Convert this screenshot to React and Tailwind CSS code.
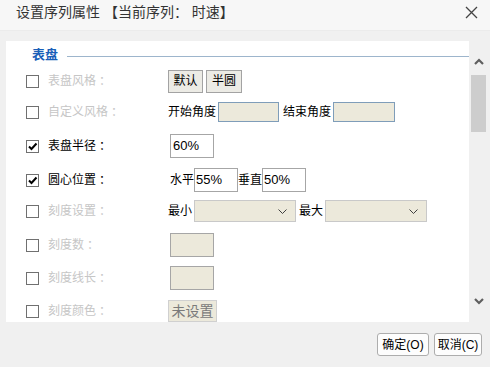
import React from 'react'

const FONT = "font-['Liberation_Sans','Noto_Sans_CJK_SC',sans-serif]"

function Check({ on }) {
  return (
    <span className="w-[13px] h-[13px] border border-[#707070] bg-white flex items-center justify-center shrink-0">
      {on && (
        <svg width="11" height="11" viewBox="0 0 11 11">
          <path d="M2 5.5 L4.5 8 L9.5 2.5" fill="none" stroke="#000" strokeWidth="2" />
        </svg>
      )}
    </span>
  )
}

function Row({ h, on, label, enabled, children }) {
  return (
    <div className={`flex items-center ${h}`}>
      <div className="w-[20px] shrink-0" />
      <Check on={on} />
      <span className={`ml-[9px] w-[120px] shrink-0 text-[12px] ${enabled ? 'text-black' : 'text-[#c6c6c6]'}`}>
        {label}<span className="ml-[3px]">：</span>
      </span>
      <div className="flex items-center text-[12px] text-black">{children}</div>
    </div>
  )
}

const Chevron = () => (
  <svg width="9" height="5" viewBox="0 0 9 5">
    <path d="M0.5 0.5 L4.5 4.5 L8.5 0.5" fill="none" stroke="#404040" strokeWidth="1" />
  </svg>
)

export default function App() {
  return (
    <div className={`w-[490px] h-[367px] bg-[#f0f0f0] flex flex-col ${FONT}`}>
      {/* title bar */}
      <div className="h-[31px] bg-[#f7f7f7] flex items-start justify-between pl-[16px] pr-[12px] pt-[4px] border-b border-[#ebebeb]">
        <span className="text-[14px] leading-[17px] text-[#333]">设置序列属性 【当前序列： 时速】</span>
        <svg width="13" height="13" viewBox="0 0 13 13" className="mt-[2px]">
          <path d="M1 1 L12 12 M12 1 L1 12" stroke="#444" strokeWidth="1.3" />
        </svg>
      </div>

      {/* body */}
      <div className="flex pt-[10px] pl-[6px]">
        <div className="w-[463px] h-[281px] bg-white overflow-hidden">
          <div className="h-[24px] flex items-center pt-[3px]">
            <div className="w-[26px] shrink-0" />
            <span className="shrink-0 text-[13px] font-bold text-[#1a5fb8] leading-none">表盘</span>
            <div className="flex-1 ml-[9px] mt-[3px] h-px bg-[#9db5cc]" />
          </div>

          <Row h="h-[32px]" label="表盘风格">
            <button className="w-[35px] h-[23px] bg-[#ecebe5] border border-[#a3a3a3] text-[12px]">默认</button>
            <button className="ml-[3px] w-[36px] h-[23px] bg-[#ecebe5] border border-[#a3a3a3] text-[12px]">半圆</button>
          </Row>

          <Row h="h-[30px]" label="自定义风格">
            <span>开始角度</span>
            <div className="ml-[2px] w-[61px] h-[20px] bg-[#ece9db] border border-[#7f9db9]" />
            <span className="ml-[4px]">结束角度</span>
            <div className="ml-[2px] w-[62px] h-[20px] bg-[#ece9db] border border-[#7f9db9]" />
          </Row>

          <Row h="h-[38px]" on enabled label="表盘半径">
            <div className="ml-[2px] w-[44px] h-[24px] bg-white border border-[#a6a6a6] flex items-center pl-[2px] text-[13px]">60%</div>
          </Row>

          <Row h="h-[30px]" on enabled label="圆心位置">
            <span className="ml-[2px]">水平</span>
            <div className="w-[44px] h-[24px] bg-white border border-[#a6a6a6] flex items-center pl-[1px] text-[13px]">55%</div>
            <span>垂直</span>
            <div className="w-[44px] h-[24px] bg-white border border-[#a6a6a6] flex items-center pl-[1px] text-[13px]">50%</div>
          </Row>

          <Row h="h-[32px]" label="刻度设置">
            <span>最小</span>
            <div className="ml-[2px] w-[102px] h-[22px] bg-[#ece9db] border border-[#c9c9c9] flex items-center justify-end pr-[8px]"><Chevron /></div>
            <span className="ml-[3px]">最大</span>
            <div className="ml-[2px] w-[102px] h-[22px] bg-[#ece9db] border border-[#c9c9c9] flex items-center justify-end pr-[8px]"><Chevron /></div>
          </Row>

          <Row h="h-[36px]" label="刻度数">
            <div className="ml-[2px] w-[44px] h-[24px] bg-[#ece9db] border border-[#a6a6a6]" />
          </Row>

          <Row h="h-[30px]" label="刻度线长">
            <div className="ml-[2px] w-[44px] h-[24px] bg-[#ece9db] border border-[#a6a6a6]" />
          </Row>

          <Row h="h-[36px]" label="刻度颜色">
            <div className="w-[49px] h-[22px] bg-[#ece9db] border border-[#d0d0d0] flex items-center justify-center text-[14px] text-[#7a7a7a]">未设置</div>
          </Row>
        </div>

        {/* scrollbar */}
        <div className="w-[17px] ml-[1px] flex flex-col items-center pt-[17px]">
          <svg width="10" height="7" viewBox="0 0 10 7">
            <path d="M1 6 L5 2 L9 6" fill="none" stroke="#5f5f5f" strokeWidth="2.2" />
          </svg>
          <div className="mt-[10px] w-[15px] h-[57px] bg-[#cdcdcd]" />
          <div className="flex-1" />
          <svg width="10" height="7" viewBox="0 0 10 7" className="mb-[17px]">
            <path d="M1 1 L5 5 L9 1" fill="none" stroke="#5f5f5f" strokeWidth="2.2" />
          </svg>
        </div>
      </div>

      {/* footer */}
      <div className="flex justify-end gap-[5px] pr-[8px] pt-[11px]">
        <button className="w-[52px] h-[23px] rounded-[3px] border border-[#adadad] bg-[#fdfdfd] text-[12px] text-black">确定(O)</button>
        <button className="w-[48px] h-[23px] rounded-[3px] border border-[#adadad] bg-[#fdfdfd] text-[12px] text-black">取消(C)</button>
      </div>
    </div>
  )
}
